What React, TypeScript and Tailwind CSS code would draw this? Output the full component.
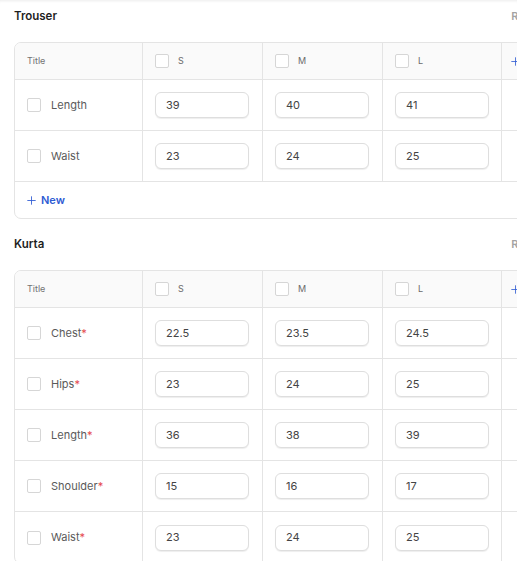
import React from 'react';
import { Plus } from 'lucide-react';

type Row = { title: string; values: string[]; required?: boolean };

const sizes = ['S', 'M', 'L'];

const trouserRows: Row[] = [
  { title: 'Length', values: ['39', '40', '41'] },
  { title: 'Waist', values: ['23', '24', '25'] },
];

const kurtaRows: Row[] = [
  { title: 'Chest', values: ['22.5', '23.5', '24.5'], required: true },
  { title: 'Hips', values: ['23', '24', '25'], required: true },
  { title: 'Length', values: ['36', '38', '39'], required: true },
  { title: 'Shoulder', values: ['15', '16', '17'], required: true },
  { title: 'Waist', values: ['23', '24', '25'], required: true },
];

const Checkbox = () => (
  <span className="block w-[14px] h-[14px] shrink-0 rounded-[2px] border border-[#d6d6d6] bg-white" />
);

const colW = ['w-[128px]', 'w-[120px]', 'w-[120px]', 'w-[119px]'];

const SizeTable = ({ name, rows, showNew }: { name: string; rows: Row[]; showNew?: boolean }) => {
  return (
    <section>
      {/* Heading */}
      <div className="flex items-center justify-between h-[33px] mb-[9px]">
        <h2 className="text-[11.5px] font-semibold text-[#1f1f1f]">{name}</h2>
        <span className="text-[11px] font-semibold text-[#a3a3a3]">Remove</span>
      </div>

      <div className="border border-[#e4e4e4] rounded-[7px] overflow-hidden bg-white">
        {/* Header row */}
        <div className="flex h-[37px] bg-[#fafafa] border-b border-[#e4e4e4]">
          <div className={`${colW[0]} shrink-0 border-r border-[#e4e4e4] flex items-center pl-[12px]`}>
            <span className="text-[9px] text-[#737373]">Title</span>
          </div>
          {sizes.map((s, i) => (
            <div
              key={s}
              className={`${colW[i + 1]} shrink-0 border-r border-[#e4e4e4] flex items-center gap-[9px] pl-[12px]`}
            >
              <Checkbox />
              <span className="text-[9px] text-[#6b6b6b]">{s}</span>
            </div>
          ))}
          <div className="flex-1 flex items-center pl-[7px]">
            <Plus size={13} strokeWidth={1.5} className="text-[#2f5bd3]" />
          </div>
        </div>

        {/* Data rows */}
        {rows.map((row, r) => (
          <div
            key={row.title}
            className={`flex h-[51px] ${r < rows.length - 1 || showNew ? 'border-b border-[#e4e4e4]' : ''}`}
          >
            <div className={`${colW[0]} shrink-0 border-r border-[#e4e4e4] flex items-center gap-[10px] pl-[12px]`}>
              <Checkbox />
              <span className="text-[11px] text-[#5a5a5a]">
                {row.title}
                {row.required && <span className="text-[#e5484d]">*</span>}
              </span>
            </div>
            {row.values.map((v, i) => (
              <div
                key={i}
                className={`${colW[i + 1]} shrink-0 border-r border-[#e4e4e4] flex items-center pl-[12px]`}
              >
                <div className="w-[94px] h-[26px] rounded-[6px] border border-[#dedede] bg-white shadow-[0_1px_1px_rgba(0,0,0,0.07)] flex items-center px-[10px] text-[11px] text-[#444]">
                  {v}
                </div>
              </div>
            ))}
            <div className="flex-1" />
          </div>
        ))}

        {showNew && (
          <div className="flex items-center h-[36px] pl-[10px] gap-[3px] text-[#2f5bd3]">
            <Plus size={13} strokeWidth={1.6} />
            <span className="text-[11px] font-semibold">New</span>
          </div>
        )}
      </div>
    </section>
  );
};

export default function App() {
  return (
    <div
      className="w-[517px] h-[561px] overflow-hidden bg-white shadow-[inset_0_3px_3px_-2px_rgba(0,0,0,0.08)]"
      style={{ fontFamily: 'Inter, "Noto Sans", sans-serif' }}
    >
      <div className="w-[568px] px-[14px] flex flex-col gap-[9px]">
        <SizeTable name="Trouser" rows={trouserRows} showNew />
        <SizeTable name="Kurta" rows={kurtaRows} />
      </div>
    </div>
  );
}
